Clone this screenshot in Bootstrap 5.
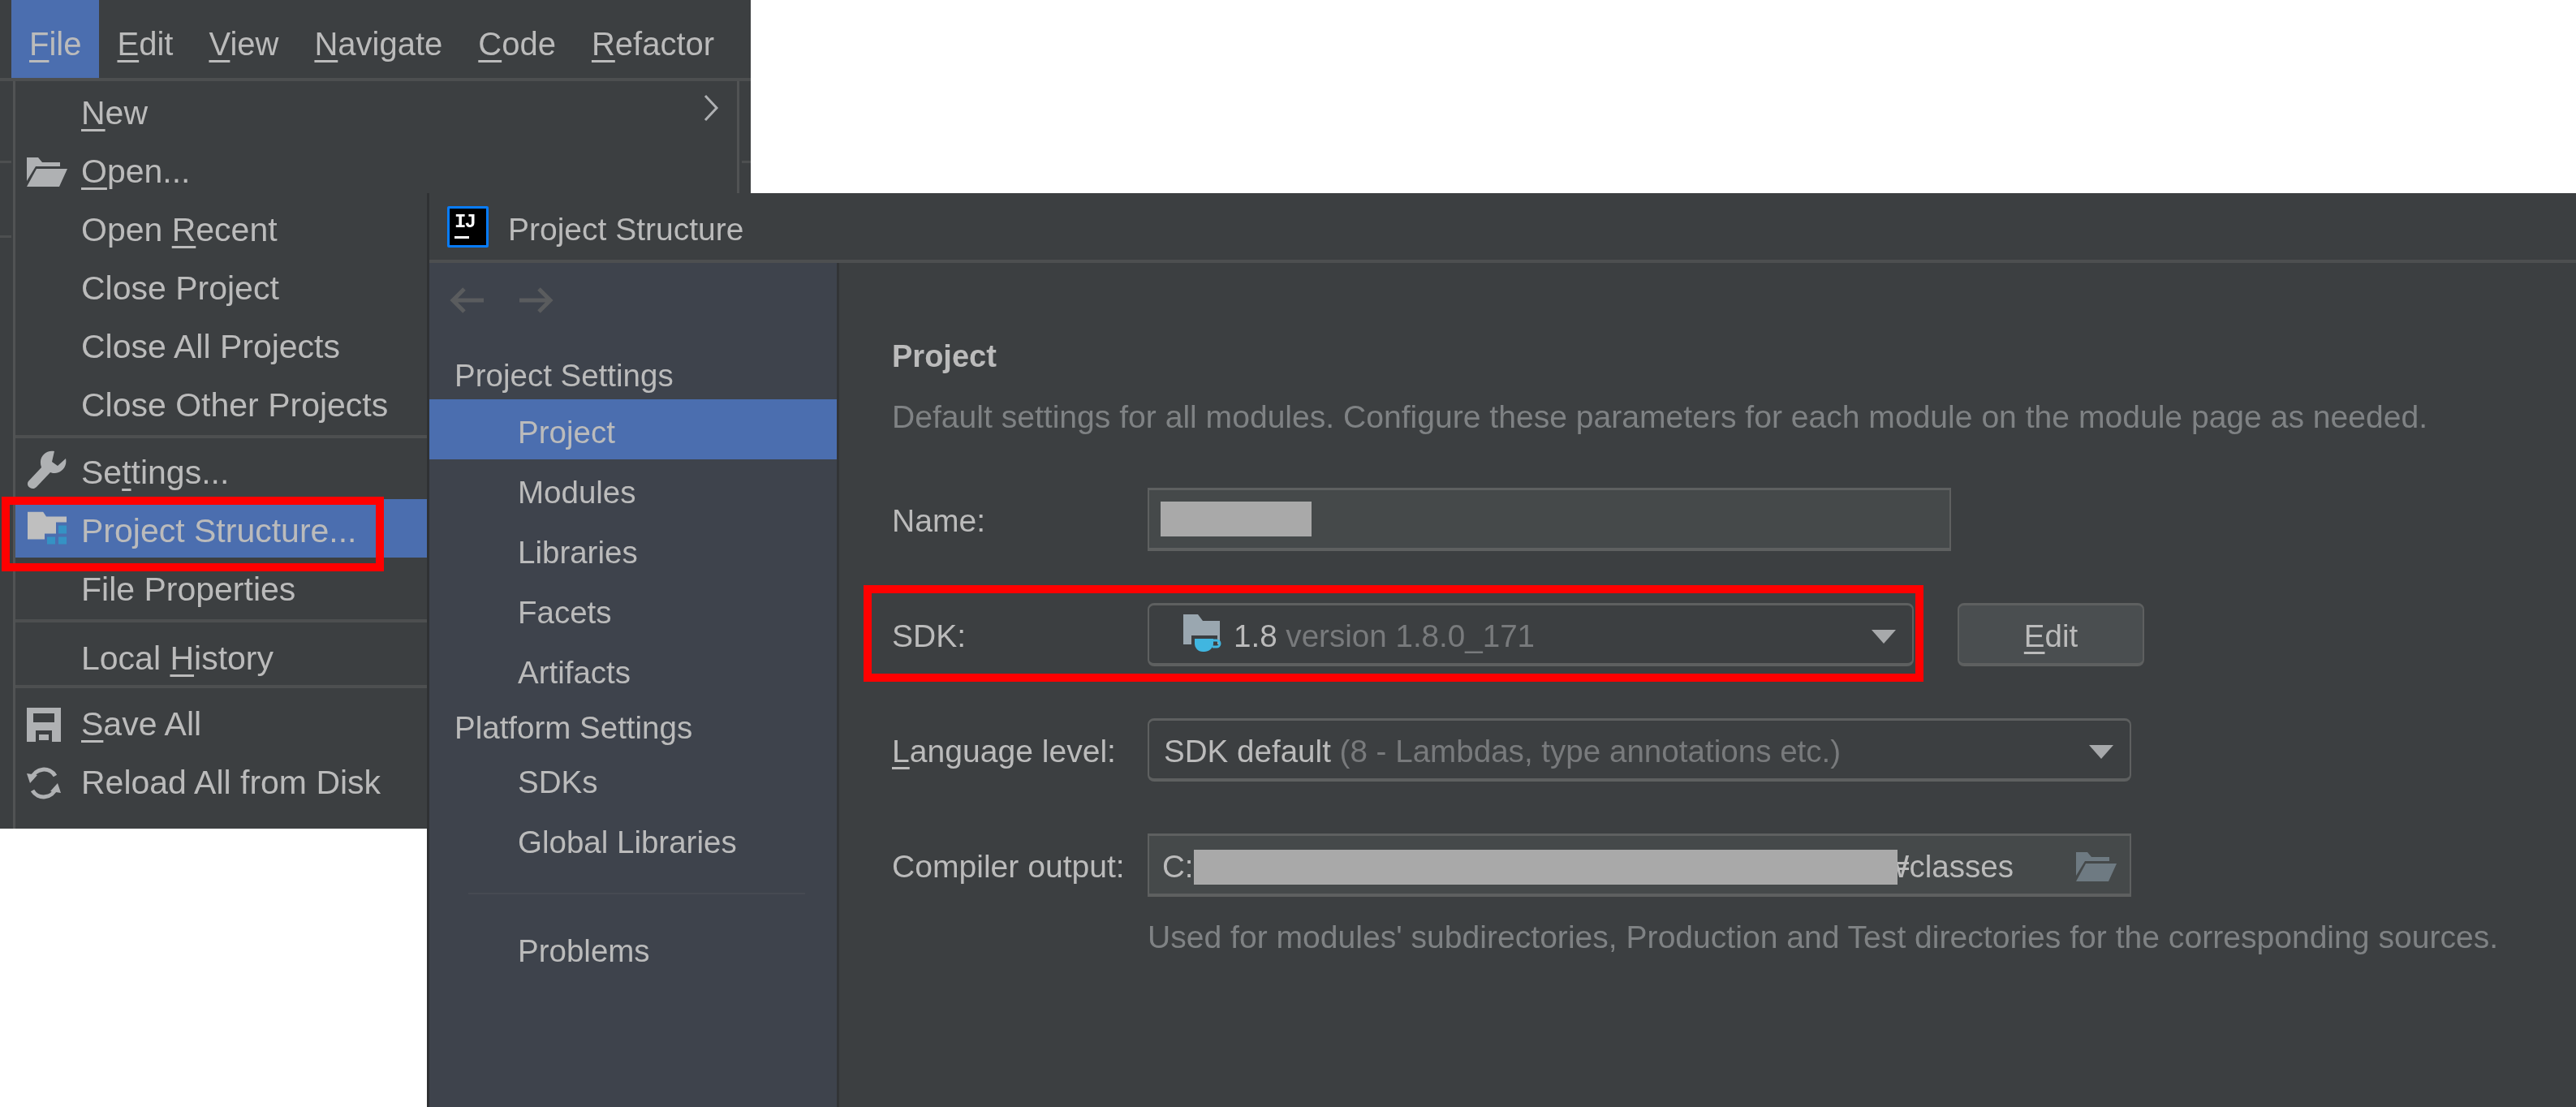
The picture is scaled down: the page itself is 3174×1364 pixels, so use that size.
<!DOCTYPE html>
<html lang="en">
<head>
  <meta charset="UTF-8" />
  <meta name="viewport" content="width=device-width, initial-scale=1.0" />
  <title>Project Structure</title>
  <link href="https://cdn.jsdelivr.net/npm/bootstrap@5.3.3/dist/css/bootstrap.min.css" rel="stylesheet">
  <style>
    body {
      background: #fff;
      width: 3174px;
      height: 1364px;
      overflow: hidden;
      position: relative;
      font-family: "Liberation Sans", Arial, sans-serif;
      color: #bbb;
    }

    u {
      text-decoration-thickness: 3px;
      text-underline-offset: 6px;
      text-decoration-skip-ink: none;
    }

    /* the two windows sit on a free canvas */
    .menu-window {
      position: absolute;
      left: 0;
      top: 0;
      width: 925px;
      height: 1021px;
      background: #3c3f41;
      font-size: 41px;
      filter: blur(.6px);
    }

    .dialog-window {
      position: absolute;
      left: 526px;
      top: 238px;
      width: 2648px;
      height: 1126px;
      background: #3c3f41;
      border-left: 3px solid #2f3133;
      font-size: 38.5px;
      filter: blur(.6px);
    }

    .menu-strip {
      margin-left: 14px;
      font-size: 40px;
    }

    .bar-item {
      height: 96px;
      padding: 12px 22px 0;
      color: #bbb;
    }

    .bar-item.is-open { background: #4b6eaf; }

    .menu-rule {
      height: 4px;
      background: #4d4f50;
      margin: 0;
      opacity: 1;
      border: 0;
    }

    .popup-menu {
      margin-left: 16px;
      width: 895px;
      height: 921px;
      padding-top: 4px;
      border-left: 3px solid #515354;
      border-right: 3px solid #515354;
    }

    .menu-row {
      height: 72px;
      padding-left: 81px;
      position: relative;
    }

    .menu-row.is-hover { background: #4b6eaf; }

    .menu-row.is-low { padding-top: 8px; }

    .rule-a { margin: 0 0 3px; }
    .rule-b { margin: 4px 0 9px; }
    .rule-c { margin: -4px 0 9px; }

    .row-icon {
      position: absolute;
      left: 14px;
      top: 50%;
      transform: translateY(-50%);
    }

    .chev {
      position: absolute;
      right: 22px;
      top: 12px;
    }

    .scrap-line {
      position: absolute;
      height: 3px;
      background: #4d4f50;
    }

    .title-strip {
      height: 82px;
      padding-left: 22px;
      gap: 24px;
      font-size: 39px;
    }

    .title-text { padding-top: 8px; }

    .ij-logo {
      width: 51px;
      height: 51px;
      background: #000;
      border: 3px solid #087cfa;
      border-radius: 2px;
      color: #fff;
      font: 700 24px/24px "Liberation Mono", monospace;
      padding: 5px 0 0 6px;
      letter-spacing: -2px;
    }

    .ij-bar {
      width: 18px;
      height: 3px;
      background: #fff;
      margin-top: 5px;
    }

    .dialog-body { height: 1040px; }

    .side-pane {
      width: 505px;
      background: #3e434c;
      border-right: 3px solid #323436;
    }

    .nav-arrows {
      height: 92px;
      padding-left: 25px;
      gap: 44px;
    }

    .side-head {
      height: 61px;
      padding: 8px 0 0 31px;
      color: #bbb;
    }

    .side-head.first {
      height: 70px;
      margin-top: 6px;
      padding-top: 12px;
    }

    .side-pane .list-group-item {
      height: 74px;
      padding: 7px 0 0 109px;
      background: transparent;
      border: 0;
      color: #bbb;
      display: flex;
      align-items: center;
    }

    .side-pane .list-group-item.active { background: #4b6eaf; }

    .side-rule {
      height: 2px;
      background: #464a52;
      margin: 29px 39px 29px 48px;
    }

    .main-pane {
      padding: 90px 0 0 65px;
      flex: 1;
      font-size: 39.1px;
    }

    .pane-title {
      font-size: 38px;
      font-weight: 700;
      line-height: 50px;
    }

    .pane-desc {
      color: #7f8284;
      line-height: 50px;
      margin-top: 25px;
    }

    .form-line { margin-top: 62px; }

    .form-line + .form-line { margin-top: 64px; }

    .field-label {
      width: 315px;
      padding-top: 5px;
    }

    .field-box {
      height: 78px;
      border: 2px solid #5e6060;
      border-top-width: 3px;
      border-bottom-width: 4px;
      border-radius: 0;
      color: #bbb;
      font-size: 38.6px;
      padding-top: 5px;
    }

    .field-box:focus {
      background: #45494a;
      color: #bbb;
      box-shadow: none;
      border-color: #5e6060;
    }

    .is-input {
      background: #45494a;
      border-radius: 0;
    }

    .is-combo {
      border-radius: 8px;
      padding: 5px 20px 0 18px;
    }

    .is-combo.has-icon { padding-left: 42px; }

    .w-name { width: 990px; flex: none; }
    .w-sdk { width: 944px; }
    .w-wide { width: 1212px; }

    .dim-text { color: #787a7c; }

    .sdk-icon { margin: -5px 12px 0 0; }

    .edit-btn {
      width: 230px;
      height: 78px;
      margin-left: 54px;
      padding: 5px 0 0;
      background: #4a4e50;
      border: 2px solid #5e6060;
      border-top-width: 3px;
      border-bottom-width: 4px;
      border-radius: 8px;
      color: #bbb;
      font-size: 38.5px;
    }

    .path-start {
      width: 884px;
      white-space: nowrap;
    }

    .hint-line {
      color: #7f8284;
      line-height: 50px;
      margin: 25px 0 0 315px;
    }

    /* masks and red marks were painted over the screenshot, they stay sharp */
    .mask {
      position: absolute;
      background: #a9a9a9;
    }

    .red-mark {
      position: absolute;
      border: 10px solid #f00;
    }
  </style>
</head>
<body>

  <div class="menu-window">
    <nav class="nav flex-nowrap menu-strip">
      <a class="bar-item is-open d-flex align-items-center text-decoration-none"><span><u>F</u>ile</span></a>
      <a class="bar-item d-flex align-items-center text-decoration-none"><span><u>E</u>dit</span></a>
      <a class="bar-item d-flex align-items-center text-decoration-none"><span><u>V</u>iew</span></a>
      <a class="bar-item d-flex align-items-center text-decoration-none"><span><u>N</u>avigate</span></a>
      <a class="bar-item d-flex align-items-center text-decoration-none"><span><u>C</u>ode</span></a>
      <a class="bar-item d-flex align-items-center text-decoration-none"><span><u>R</u>efactor</span></a>
    </nav>
    <hr class="menu-rule">
    <div class="popup-menu">
      <div class="menu-row d-flex align-items-center">
        <span><u>N</u>ew</span>
        <svg class="chev" width="20" height="34" viewBox="0 0 20 34"><path d="M3 2 L17 17 L3 32" fill="none" stroke="#afb1b3" stroke-width="3"/></svg>
      </div>
      <div class="menu-row d-flex align-items-center">
        <svg class="row-icon" width="50" height="36" viewBox="0 0 50 36"><path d="M0 0H14L19 6H41V11H11L0 29Z" fill="#afb1b3"/><path d="M12 14H50L40 36H0Z" fill="#afb1b3"/></svg>
        <span><u>O</u>pen...</span>
      </div>
      <div class="menu-row d-flex align-items-center"><span>Open <u>R</u>ecent</span></div>
      <div class="menu-row d-flex align-items-center"><span>Close Project</span></div>
      <div class="menu-row d-flex align-items-center"><span>Close All Projects</span></div>
      <div class="menu-row d-flex align-items-center"><span>Close Other Projects</span></div>
      <hr class="menu-rule rule-a">
      <div class="menu-row is-low d-flex align-items-center">
        <svg class="row-icon" width="50" height="48" viewBox="0 0 50 48"><path d="M34 1C25-1 16 6 17 16C17 18 18 20 18 21L2 38C0 41 1 44 4 46C7 48 10 47 12 45L29 27C31 28 33 28 35 28C44 27 50 19 48 10L38 19L31 14Z" fill="#afb1b3"/></svg>
        <span>Se<u>t</u>tings...</span>
      </div>
      <div class="menu-row is-low is-hover d-flex align-items-center">
        <svg class="row-icon" width="51" height="41" viewBox="0 0 51 41"><path d="M1 0H20L24 6H49V13H36V27H22V34H1Z" fill="#bfbfbf"/><path d="M39 17H49V27H39ZM25 31H35V40H25ZM39 31H49V40H39Z" fill="#3592c4"/></svg>
        <span>Project Structure...</span>
      </div>
      <div class="menu-row is-low d-flex align-items-center"><span>File Properties</span></div>
      <hr class="menu-rule rule-b">
      <div class="menu-row d-flex align-items-center"><span>Local <u>H</u>istory</span></div>
      <hr class="menu-rule rule-c">
      <div class="menu-row d-flex align-items-center">
        <svg class="row-icon" width="42" height="42" viewBox="0 0 42 42"><path d="M0 0H42V42H0Z" fill="#afb1b3"/><path d="M8 7H34V18H8ZM11 28H31V42H11Z" fill="#3c3f41"/><path d="M15 33H27V40H15Z" fill="#afb1b3"/></svg>
        <span><u>S</u>ave All</span>
      </div>
      <div class="menu-row d-flex align-items-center">
        <svg class="row-icon" width="42" height="42" viewBox="0 0 42 42"><path d="M6 15A16 16 0 0 1 35 12M36 27A16 16 0 0 1 7 30" fill="none" stroke="#afb1b3" stroke-width="5"/><path d="M0 9L13 11L4 21ZM42 33L29 31L38 21Z" fill="#afb1b3"/></svg>
        <span>Reload All from Disk</span>
      </div>
    </div>
    <div class="scrap-line" style="left:0;top:198px;width:14px"></div>
    <div class="scrap-line" style="left:0;top:290px;width:14px"></div>
    <div class="scrap-line" style="left:914px;top:198px;width:11px"></div>
  </div>

  <div class="dialog-window">
    <div class="title-strip d-flex align-items-center">
      <div class="ij-logo">IJ<div class="ij-bar"></div></div>
      <span class="title-text">Project Structure</span>
    </div>
    <hr class="menu-rule">
    <div class="dialog-body d-flex">
      <aside class="side-pane flex-shrink-0">
        <div class="nav-arrows d-flex align-items-center">
          <svg width="42" height="32" viewBox="0 0 42 32"><path d="M42 16H4M18 2L4 16L18 30" fill="none" stroke="#5a5c5e" stroke-width="5"/></svg>
          <svg width="42" height="32" viewBox="0 0 42 32"><path d="M0 16H38M24 2L38 16L24 30" fill="none" stroke="#5a5c5e" stroke-width="5"/></svg>
        </div>
        <div class="side-head first d-flex align-items-center">Project Settings</div>
        <div class="list-group list-group-flush">
          <a class="list-group-item active">Project</a>
          <a class="list-group-item">Modules</a>
          <a class="list-group-item">Libraries</a>
          <a class="list-group-item">Facets</a>
          <a class="list-group-item">Artifacts</a>
        </div>
        <div class="side-head d-flex align-items-center">Platform Settings</div>
        <div class="list-group list-group-flush">
          <a class="list-group-item">SDKs</a>
          <a class="list-group-item">Global Libraries</a>
        </div>
        <div class="side-rule"></div>
        <div class="list-group list-group-flush">
          <a class="list-group-item">Problems</a>
        </div>
      </aside>
      <main class="main-pane">
        <div class="pane-title">Project</div>
        <div class="pane-desc">Default settings for all modules. Configure these parameters for each module on the module page as needed.</div>

        <div class="form-line d-flex align-items-center">
          <label class="field-label">Name:</label>
          <input class="form-control field-box is-input w-name" type="text" value="">
        </div>

        <div class="form-line d-flex align-items-center">
          <label class="field-label">SDK:</label>
          <div class="field-box is-combo has-icon w-sdk d-flex align-items-center">
            <svg width="50" height="50" viewBox="0 0 50 50" class="flex-shrink-0 sdk-icon"><path d="M0 0H18L24 8H45V37H0Z" fill="#9aa7b0"/><path d="M10 26H42V46H10Z" fill="#3c3f41"/><path d="M14 30H37V36C37 42 31 46 26 46H24C18 46 14 41 14 36Z" fill="#40b6e0"/><path d="M37 32h4a4 4 0 0 1 0 8h-5" fill="none" stroke="#40b6e0" stroke-width="3"/></svg>
            <span>1.8 <span class="dim-text">version 1.8.0_171</span></span>
            <svg class="ms-auto" width="30" height="17" viewBox="0 0 30 17"><path d="M0 0H30L15 17Z" fill="#a7a9ab"/></svg>
          </div>
          <button class="btn edit-btn" type="button"><u>E</u>dit</button>
        </div>

        <div class="form-line d-flex align-items-center">
          <label class="field-label"><u>L</u>anguage level:</label>
          <div class="field-box is-combo w-wide d-flex align-items-center">
            <span>SDK default <span class="dim-text">(8 - Lambdas, type annotations etc.)</span></span>
            <svg class="ms-auto" width="30" height="17" viewBox="0 0 30 17"><path d="M0 0H30L15 17Z" fill="#a7a9ab"/></svg>
          </div>
        </div>

        <div class="form-line d-flex align-items-center">
          <label class="field-label">Compiler output:</label>
          <div class="field-box is-input w-wide d-flex align-items-center ps-3">
            <span class="path-start">C:</span><span>₩classes</span>
            <svg class="ms-auto me-3" width="50" height="36" viewBox="0 0 50 36"><path d="M0 0H14L19 6H41V11H11L0 29Z" fill="#6e7a82"/><path d="M12 14H50L40 36H0Z" fill="#6e7a82"/></svg>
          </div>
        </div>

        <div class="hint-line">Used for modules' subdirectories, Production and Test directories for the corresponding sources.</div>
      </main>
    </div>
  </div>

  <div class="mask" style="left:1430px;top:618px;width:186px;height:43px"></div>
  <div class="mask" style="left:1471px;top:1047px;width:867px;height:43px"></div>
  <div class="red-mark" style="left:2px;top:612px;width:471px;height:92px"></div>
  <div class="red-mark" style="left:1064px;top:721px;width:1306px;height:119px"></div>

  <script src="https://cdn.jsdelivr.net/npm/bootstrap@5.3.3/dist/js/bootstrap.bundle.min.js"></script>
</body>
</html>
